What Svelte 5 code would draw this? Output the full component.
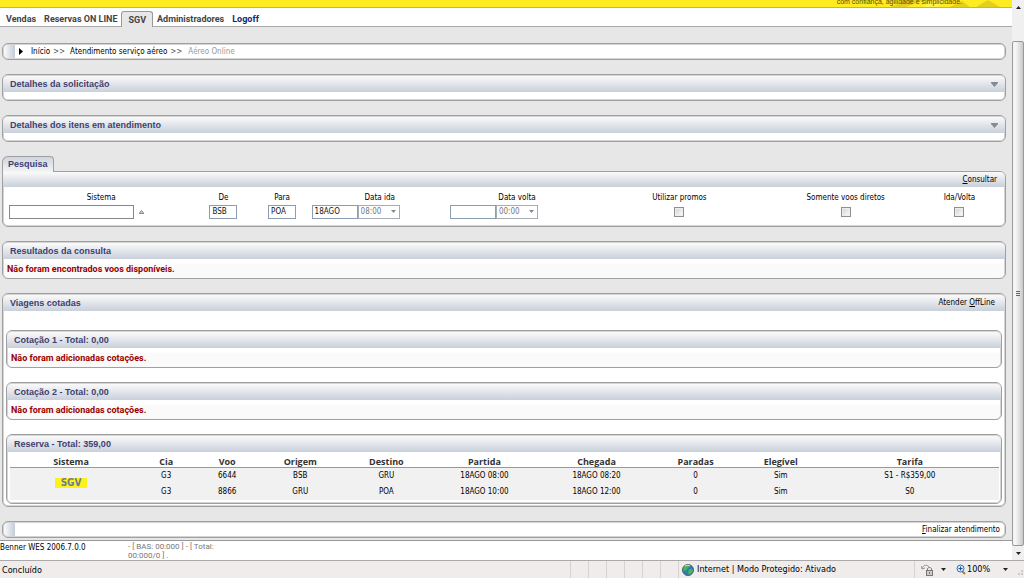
<script>
  const columns = [
    ['Sistema', 122], ['Cia', 68], ['Voo', 54], ['Origem', 92], ['Destino', 80],
    ['Partida', 116], ['Chegada', 108], ['Paradas', 90], ['Elegível', 80], ['Tarifa', 178]
  ];
  const total = columns.reduce((sum, c) => sum + c[1], 0);
  const flights = [
    ['G3', '6644', 'BSB', 'GRU', '18AGO 08:00', '18AGO 08:20', '0', 'Sim', 'S1 - R$359,00'],
    ['G3', '8866', 'GRU', 'POA', '18AGO 10:00', '18AGO 12:00', '0', 'Sim', 'S0']
  ];
  const quotes = ['Cotação 1 - Total: 0,00', 'Cotação 2 - Total: 0,00'];
  const details = ['Detalhes da solicitação', 'Detalhes dos itens em atendimento'];
  let openDetails = $state([false, false]);
</script>

{#snippet caret()}
  <svg class="caret" width="5" height="3" viewBox="0 0 5 3" aria-hidden="true"><path d="M0 0h5L2.5 3z" fill="#222" /></svg>
{/snippet}

<div class="window">
  <div class="view">
    <div class="page">
      <header class="banner">
        <span>com confiança, agilidade e simplicidade.</span>
        <svg width="120" height="7" viewBox="0 0 120 7" aria-hidden="true">
          <path d="M0 7L12 0h20L14 7zM58 7L70 1l8 6zM84 7L96 0l12 7z" fill="#e3d01e" />
          <path d="M30 7L42 0h10L46 7z" fill="#fff04d" />
        </svg>
      </header>

      <nav class="menu">
        <a href="#vendas">Vendas</a>
        <a href="#reservas">Reservas ON LINE</a>
        <a href="#sgv" class="current">SGV</a>
        <a href="#admin">Administradores</a>
        <a href="#logoff" class="logoff">Logoff</a>
      </nav>

      <main>
        <nav class="bar crumbs">
          <svg width="4" height="7" viewBox="0 0 4 7" aria-hidden="true"><path d="M0 0l4 3.500L0 7z" /></svg>
          <a href="#inicio">Início</a><i>&gt;&gt;</i>
          <a href="#atendimento">Atendimento serviço aéreo</a><i>&gt;&gt;</i>
          <span>Aéreo Online</span>
        </nav>

        {#each details as title, i}
          <section class="panel">
            <div class="head">
              <h2>{title}</h2>
              <button class="toggle" aria-label={title} aria-expanded={openDetails[i]} onclick={() => (openDetails[i] = !openDetails[i])}>
                <svg width="7" height="5" viewBox="0 0 7 5"><path d="M0 0h7v1L3.500 5 0 1z" fill="#858b95" /></svg>
              </button>
            </div>
            <div class="empty"></div>
          </section>
        {/each}

        <div class="search">
          <div class="tab"><h2>Pesquisa</h2></div>
          <form class="panel tabbed" onsubmit={(e) => e.preventDefault()}>
            <div class="tools"><button><u>C</u>onsultar</button></div>
            <div class="fields">
              <div class="field">
                <label for="sistema">Sistema</label>
                <div class="row start">
                  <input id="sistema" class="wide" type="text" />
                  <svg width="5" height="4" viewBox="0 0 5 4" aria-hidden="true"><path d="M0 3.500L2.500.500 5 3.500z" fill="#ccc" stroke="#777" stroke-width=".8" /></svg>
                </div>
              </div>
              <div class="field">
                <label for="de">De</label>
                <div class="row"><input id="de" class="code" type="text" value="BSB" /></div>
              </div>
              <div class="field para">
                <label for="para">Para</label>
                <div class="row"><input id="para" class="code" type="text" value="POA" /></div>
              </div>
              <div class="field">
                <label for="ida">Data ida</label>
                <div class="row start date">
                  <input id="ida" class="day" type="text" value="18AGO" />
                  <span class="select"><select aria-label="Hora ida"><option>08:00</option></select><svg width="5" height="3" viewBox="0 0 5 3"><path d="M0 0h5L2.500 3z" fill="#888" /></svg></span>
                </div>
              </div>
              <div class="field">
                <label for="volta">Data volta</label>
                <div class="row start date">
                  <input id="volta" class="day" type="text" />
                  <span class="select"><select aria-label="Hora volta"><option>00:00</option></select><svg width="5" height="3" viewBox="0 0 5 3"><path d="M0 0h5L2.500 3z" fill="#888" /></svg></span>
                </div>
              </div>
              <div class="field">
                <label for="promos">Utilizar promos</label>
                <div class="row"><input id="promos" type="checkbox" /></div>
              </div>
              <div class="field">
                <label for="diretos">Somente voos diretos</label>
                <div class="row"><input id="diretos" type="checkbox" /></div>
              </div>
              <div class="field">
                <label for="idavolta">Ida/Volta</label>
                <div class="row"><input id="idavolta" type="checkbox" /></div>
              </div>
            </div>
          </form>
        </div>

        <section class="panel">
          <div class="head"><h2>Resultados da consulta</h2></div>
          <p class="warning">Não foram encontrados voos disponíveis.</p>
        </section>

        <section class="panel">
          <div class="head">
            <h2>Viagens cotadas</h2>
            <button class="offline">Atender <u>O</u>ffLine</button>
          </div>
          <div class="trips">
            {#each quotes as quote}
              <section class="panel">
                <div class="head"><h2>{quote}</h2></div>
                <p class="warning">Não foram adicionadas cotações.</p>
              </section>
            {/each}
            <section class="panel">
              <div class="head"><h2>Reserva - Total: 359,00</h2></div>
              <div class="booking">
                <table>
                  <colgroup>
                    {#each columns as [, width]}<col style:width="{(width / total) * 100}%" />{/each}
                  </colgroup>
                  <thead>
                    <tr>{#each columns as [name]}<th>{name}</th>{/each}</tr>
                  </thead>
                  <tbody>
                    {#each flights as flight, i}
                      <tr>
                        {#if i === 0}<td rowspan="2"><span class="sgv">SGV</span></td>{/if}
                        {#each flight as cell}<td>{cell}</td>{/each}
                      </tr>
                    {/each}
                  </tbody>
                </table>
              </div>
            </section>
          </div>
        </section>

        <div class="bar finish"><button><u>F</u>inalizar atendimento</button></div>
      </main>

      <footer>
        <span class="version">Benner WES 2006.7.0.0</span>
        <span class="timing">- [ BAS: 00:000 ] - [ Total: 00:000/0 ] .</span>
      </footer>
    </div>

    <div class="scroll" aria-hidden="true">
      <div class="arrow"><svg width="5" height="3" viewBox="0 0 5 3"><path d="M0 3h5L2.500 0z" fill="#222" /></svg></div>
      <div class="thumb"><svg width="4" height="6" viewBox="0 0 4 6"><path d="M0 .5h4M0 2.500h4M0 4.500h4" stroke="#666" /></svg></div>
      <div class="arrow down">{@render caret()}</div>
    </div>
  </div>

  <div class="status">
    <span class="done">Concluído</span>
    <div class="cells"><i></i><i></i><i></i><i></i><i></i><i></i><i></i></div>
    <div class="zone">
      <svg width="12" height="12" viewBox="0 0 12 12" aria-hidden="true">
        <circle cx="6" cy="6" r="5.500" fill="#2b7fae" stroke="#47636f" />
        <path d="M2 2.500C4 .5 7 1 7 2.500S5 4 5 5.500 3 6 2 7 1 4 2 2.500zM7 5.500c2-1 4 0 4 1S9 10 7.500 10.500 6 7 7 5.500z" fill="#51b257" />
        <path d="M3 2c2-1 4-1 5 0" stroke="#d4f1f8" fill="none" />
      </svg>
      <span>Internet | Modo Protegido: Ativado</span>
    </div>
    <div class="privacy">
      <svg width="13" height="12" viewBox="0 0 13 12" aria-hidden="true">
        <path d="M1 5C2 1 6 0 8 3M1 5l-.5-3M1 5l3-1" fill="none" stroke="#999" />
        <rect x="5.500" y="6.500" width="6" height="5" fill="#ccc" stroke="#777" />
        <path d="M6.500 6V5c0-2 4-2 4 0v1M8.500 8v2" fill="none" stroke="#777" />
      </svg>
      {@render caret()}
    </div>
    <div class="zoom">
      <svg width="10" height="11" viewBox="0 0 10 11" aria-hidden="true">
        <path d="M6 7l3 3" stroke="#b27a3c" stroke-width="2" />
        <circle cx="4.500" cy="4.500" r="3.500" fill="#d5ebff" stroke="#316fc0" />
        <path d="M4.500 2.500v4M2.500 4.500h4" stroke="#1853aa" />
      </svg>
      <span>100%</span>
      {@render caret()}
    </div>
    <svg class="grip" width="7" height="7" viewBox="0 0 7 7" aria-hidden="true"><path d="M5 0h2v2H5zM5 3h2v2H5zM2 3h2v2H2z" fill="#ccc" /></svg>
  </div>
</div>

<style>
  :global(body) { margin: 0; background: #e7e7e7; }
  .window {
    display: flex;
    flex-direction: column;
    min-height: 100vh;
    font: 8px/12px "DejaVu Sans Condensed", Tahoma, sans-serif;
    color: #000;
  }
  .window :global(*) { box-sizing: border-box; }
  a { color: inherit; text-decoration: none; }
  h2, p { margin: 0; }
  svg { display: block; flex: none; }
  button { font: inherit; color: inherit; border: 0; padding: 0; background: none; cursor: pointer; }
  .view { display: flex; flex: 1; }
  .page { flex: 1; min-width: 0; display: flex; flex-direction: column; background: #e7e7e7; }

  .banner {
    display: flex;
    justify-content: flex-end;
    height: 8px;
    overflow: hidden;
    background: #ffec20;
    border-bottom: 1px solid #c9b832;
    color: #554d00;
    font: 7px/7px "Liberation Sans", sans-serif;
  }
  .banner svg { margin-left: -70px; }
  .banner span { z-index: 1; margin-top: -2px; }

  .menu {
    display: flex;
    align-items: flex-end;
    height: 19px;
    padding-left: 6px;
    background: #fff;
    border-bottom: 1px solid #aaa;
    color: #444;
    font: bold 9px/14px Roboto, sans-serif;
  }
  .menu a { margin-right: 8px; }
  .menu .current {
    margin: 0 4px -1px -4px;
    padding: 1px 6px 0;
    border: 1px solid #999;
    border-bottom: 0;
    border-radius: 3px 3px 0 0;
    background: #e7e7e7;
  }
  .menu .logoff { color: #0e2a72; }

  main { display: flex; flex-direction: column; gap: 14px; padding: 16px 6px 2px 2px; }

  .bar, .panel {
    border: 1px solid #a0a0a0;
    border-radius: 6px;
    background: #fff;
    box-shadow: inset 0 0 0 1px #d4d4d4;
  }
  .bar {
    display: flex;
    align-items: center;
    height: 17px;
    background: linear-gradient(90deg, #fff, #c5ccd8) 0 0 / 12px 100% no-repeat #fff;
  }
  .crumbs { padding-left: 16px; }
  .crumbs a { margin-left: 8px; }
  .crumbs a + i { margin-left: 3px; }
  .crumbs a:nth-of-type(2) { margin-left: 5px; }
  .crumbs i { font-style: normal; color: #555; }
  .crumbs span { margin-left: 6px; color: #999; }
  .finish { justify-content: flex-end; padding-right: 5px; }

  .head {
    display: flex;
    align-items: center;
    justify-content: space-between;
    height: 17px;
    padding: 0 7px;
    border-radius: 5px 5px 0 0;
    border-top: 1px solid #d4d4d4;
    background: linear-gradient(#fafafa, #c9d0da);
  }
  .head h2, .tab h2 { font: bold 9px/14px "Liberation Sans", Arial, sans-serif; color: #3d3f70; }
  .offline { margin-right: 3px; }
  .empty { height: 8px; }
  .panel .warning {
    height: 19px;
    margin: 0 1px;
    padding: 4px 3px 0;
    border-radius: 0 0 5px 5px;
    background: linear-gradient(#fff 4px, #fafafa 5px);
    color: #9a0000;
    font: bold 9px/12px Roboto, sans-serif;
  }

  .search { display: flex; flex-direction: column; align-items: flex-start; }
  .tab {
    height: 16px;
    margin-bottom: -1px;
    padding: 0 5px;
    border: 1px solid #a0a0a0;
    border-bottom: 0;
    border-radius: 6px 4px 0 0;
    background: linear-gradient(#d0d6df, #f3f4f6);
    z-index: 1;
  }
  .tabbed { width: 100%; border-top-left-radius: 0; }
  .tools {
    display: flex;
    justify-content: flex-end;
    height: 15px;
    padding: 1px 8px;
    border-radius: 0 5px 0 0;
    background: linear-gradient(#fafafa, #c9d0da);
  }
  .fields {
    display: grid;
    grid-template-columns: 196fr 48fr 63fr 138fr 136fr 188fr 144fr 83fr;
    height: 39px;
    padding: 5px 4px 0 0;
  }
  .field { display: flex; flex-direction: column; align-items: center; }
  .field.para { padding-left: 6px; }
  .row { display: flex; align-items: center; height: 15px; }
  .row.start { align-self: stretch; padding-left: 6px; gap: 5px; }
  .row.date { padding-left: 1px; gap: 0; }
  input[type="text"], select {
    height: 14px;
    margin: 0;
    padding: 0 2px;
    border: 1px solid #8b9db5;
    border-radius: 0;
    background: #fff;
    color: #111;
    font: inherit;
  }
  input[type="text"].wide { width: 125px; border-color: #888; }
  .code { width: 28px; }
  .day { width: 46px; }
  .select { display: grid; align-items: center; }
  .select > * { grid-area: 1 / 1; }
  .select svg { justify-self: end; margin-right: 4px; pointer-events: none; }
  select { appearance: none; width: 42px; color: #777; border-color: #a5adb8; }
  input[type="checkbox"] {
    appearance: none;
    width: 10px;
    height: 10px;
    margin: 0;
    border: 1px solid #8e8f8f;
    background: linear-gradient(135deg, #d0d0d0, #fff);
    box-shadow: inset 0 0 0 1px #eee;
  }

  .trips { display: flex; flex-direction: column; gap: 14px; padding: 19px 3px 2px; }
  .booking { padding: 2px 2px 3px 3px; }
  table { width: 100%; table-layout: fixed; border-collapse: separate; border-spacing: 0; text-align: center; }
  th {
    height: 14px;
    padding: 2px 0 0;
    border-bottom: 1px solid #999;
    color: #333;
    font: bold 9px/11px "Open Sans", sans-serif;
  }
  td { height: 16px; padding: 0; background: #f1f1f1; }
  .sgv {
    display: inline-block;
    padding: 0 6px;
    background: #fbf21c;
    color: #6f7b92;
    font: bold 10px/10px "DejaVu Sans Condensed", sans-serif;
  }

  footer {
    display: flex;
    flex: 1;
    border-top: 1px solid #999;
    background: #fff;
  }
  .version { width: 128px; line-height: 13px; }
  .timing { width: 100px; color: #777; font-family: Roboto, sans-serif; font-size: 8px; line-height: 9px; padding-top: 1px; }

  .scroll {
    display: flex;
    flex-direction: column;
    width: 12px;
    background: #f0f0f0;
  }
  .arrow { display: flex; justify-content: center; height: 41px; padding: 6px 0; }
  .arrow.down { height: 14px; align-items: center; padding: 0; }
  .thumb {
    display: flex;
    flex: 1;
    align-items: center;
    justify-content: center;
    border: 1px solid #999;
    border-radius: 2px;
    background: linear-gradient(90deg, #f5f5f5 30%, #c9c9cb);
  }

  .status {
    display: flex;
    height: 18px;
    border-top: 1px solid #aaa;
    background: #efeceb;
    font-size: 9px;
    line-height: 19px;
  }
  .done { flex: 1; padding-left: 2px; }
  .cells { display: flex; }
  .cells i { width: 18px; border-left: 1px solid #d5d2d0; }
  .cells i:last-child { width: 4px; }
  .zone { display: flex; align-items: center; gap: 3px; width: 232px; white-space: nowrap; }
  .privacy { display: flex; align-items: center; gap: 7px; width: 42px; padding-left: 6px; border-left: 1px solid #d5d2d0; }
  .zoom { display: flex; align-items: center; gap: 1px; width: 58px; }
  .zoom :global(.caret) { margin-left: auto; margin-right: 6px; }
  .grip { align-self: flex-end; margin: 0 1px 1px 2px; }
</style>
